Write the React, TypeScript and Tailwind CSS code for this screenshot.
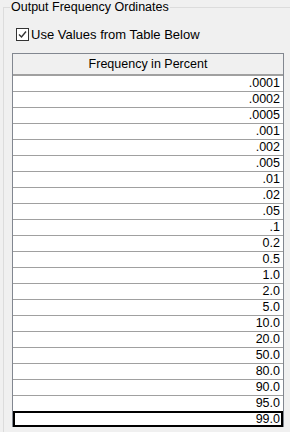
const rows = [
  '.0001', '.0002', '.0005', '.001', '.002', '.005', '.01', '.02', '.05', '.1',
  '0.2', '0.5', '1.0', '2.0', '5.0', '10.0', '20.0', '50.0', '80.0', '90.0', '95.0', '99.0',
];

function CheckMark() {
  return (
    <svg width="9" height="9" viewBox="0 0 9 9" className="block">
      <path d="M1 4.5 L3.5 7 L8 1.5" fill="none" stroke="#333" strokeWidth="1.4" />
    </svg>
  );
}

export default function App() {
  return (
    <div
      className="w-[290px] h-[432px] bg-[#f0f0f0] overflow-hidden text-[12px] text-black"
      style={{ fontFamily: '"Liberation Sans", Arial, sans-serif' }}
    >
      <fieldset className="ml-[3px] border-l border-t border-[#dcdcdc] p-0 min-w-0 h-[440px]">
        <legend className="ml-[6px] px-[1px] leading-[15px] text-[12.5px]">Output Frequency Ordinates</legend>

        <div className="pl-[8px]">
          {/* checkbox */}
          <div className="flex items-center gap-[2px] mt-[13px] pl-[4px] h-[13px]">
            <div className="w-[13px] h-[13px] border border-[#333] bg-white flex items-center justify-center">
              <CheckMark />
            </div>
            <span className="text-[13px] leading-[13px]">Use Values from Table Below</span>
          </div>

          {/* table */}
          <div className="mt-[12px] w-[272px] border-l border-r border-t border-[#828790] bg-white">
            <div className="h-[22px] bg-[#f0f0f0] border-b-2 border-[#a0a0a0] flex items-center justify-center text-[12.5px]">
              Frequency in Percent
            </div>
            {rows.map((r, i) =>
              i === rows.length - 1 ? (
                <div
                  key={r}
                  className="h-[16px] border-2 border-black -mt-[1px] flex items-center justify-end pr-[1px] leading-[14px] text-[12.5px]"
                >
                  {r}
                </div>
              ) : (
                <div
                  key={r}
                  className="h-[16px] border-b border-[#a0a0a0] flex items-center justify-end pr-[3px] leading-[15px] text-[12.5px]"
                >
                  {r}
                </div>
              ),
            )}
          </div>
        </div>
      </fieldset>
    </div>
  );
}
